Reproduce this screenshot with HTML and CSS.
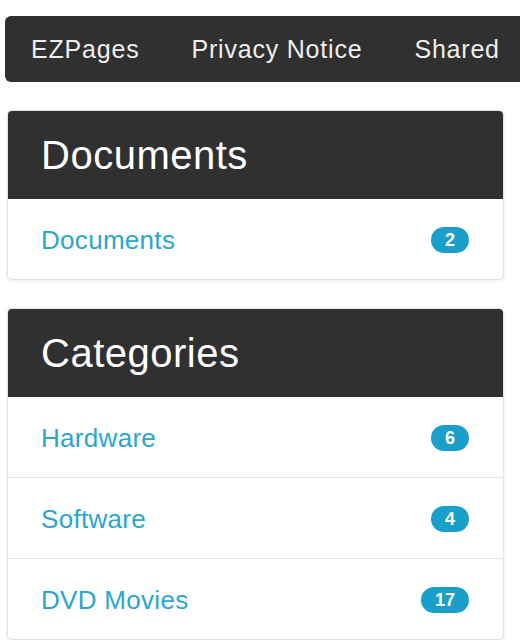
FILE: index.html
```html
<!DOCTYPE html>
<html lang="en">
<head>
    <meta charset="UTF-8">
    <meta name="viewport" content="width=device-width, initial-scale=1.0">
    <title>Sidebar</title>
    <link rel="stylesheet" href="styles.css">
</head>
<body>

<div class="navbar">
    <a href="#">EZPages</a>
    <a href="#">Privacy Notice</a>
    <a href="#">Shared</a>
</div>

<div class="card">
    <h2 class="card-header">Documents</h2>
    <ul class="list">
        <li><a href="#">Documents</a><span class="badge">2</span></li>
    </ul>
</div>

<div class="card">
    <h2 class="card-header">Categories</h2>
    <ul class="list">
        <li><a href="#">Hardware</a><span class="badge">6</span></li>
        <li><a href="#">Software</a><span class="badge">4</span></li>
        <li><a href="#">DVD Movies</a><span class="badge">17</span></li>
    </ul>
</div>

</body>
</html>
```

FILE: styles.css
```css
body {
    font-family: "Liberation Sans", Arial, sans-serif;
    margin: 0;
    padding: 16px 0 0 0;
    background-color: #fff;
    overflow: hidden;
}
.navbar {
    display: flex;
    align-items: center;
    height: 66px;
    margin-left: 5px;
    background-color: #303030;
    border-radius: 6px 0 0 6px; /* runs off the right edge */
    overflow: hidden;
}
.navbar a {
    color: #eee;
    text-decoration: none;
    font-size: 25px;
    letter-spacing: 0.8px;
    padding: 0 26px;
    white-space: nowrap;
}
.card {
    width: 495px;
    margin: 28px 0 28px 7px;
    border: 1px solid #e3e3e3;
    border-radius: 5px;
    background: #fff;
    box-shadow: 0 1px 4px rgba(0, 0, 0, 0.08);
    overflow: hidden;
}
.card-header {
    margin: 0;
    padding: 20px 33px;
    background-color: #303030;
    color: #fff;
    font-size: 40px;
    font-weight: normal;
    letter-spacing: 0.5px;
    line-height: 48px;
}
.list {
    list-style: none;
    margin: 0;
    padding: 0;
}
.list li {
    display: flex;
    align-items: center;
    justify-content: space-between;
    padding: 23px 34px 21px 33px;
    border-top: 1px solid #e6e6e6;
}
.list li:first-child {
    border-top: none;
}
.list a {
    color: #2aa6cf;
    text-decoration: none;
    font-size: 26px;
    letter-spacing: 0.3px;
    line-height: 36px;
}
.badge {
    display: inline-block;
    height: 26px;
    line-height: 26px;
    padding: 0 14px;
    border-radius: 13px;
    background-color: #1a9fca;
    color: #fff;
    font-size: 18px;
    font-weight: bold;
}
```
